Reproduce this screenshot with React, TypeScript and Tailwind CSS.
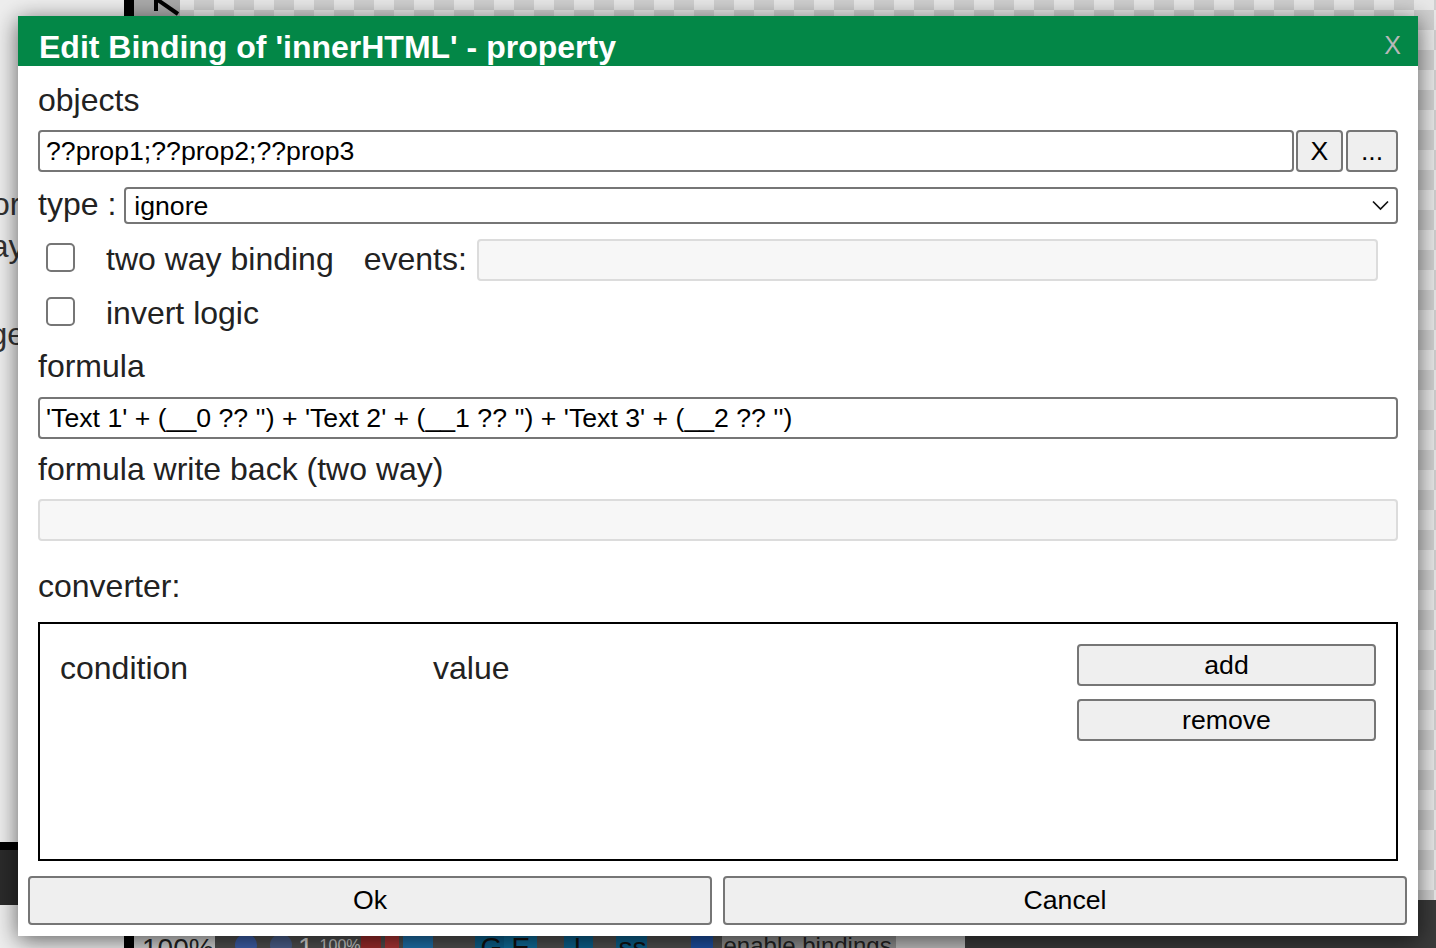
import React from "react";

const label = "text-[32px] leading-[36px] text-[#222]";
const btn =
  "bg-[#efefef] border-2 border-[#767676] rounded-[4px] text-[26.67px] leading-none text-black flex items-center justify-center";
const box = "w-[29px] h-[29px] border-2 border-[#767676] rounded-[5px] bg-white shrink-0";

function Backdrop() {
  return (
    <div className="flex h-full w-full">
      {/* sidebar of the app under the dialog */}
      <div className="flex w-[124px] flex-col overflow-hidden bg-[#eeeeee] text-[32px] leading-[36px] text-[#333]">
        <div className="h-[186px] shrink-0" />
        <div className="ml-[-49px] whitespace-nowrap">color</div>
        <div className="ml-[-75px] mt-[6px] whitespace-nowrap">display</div>
        <div className="ml-[-62px] mt-[52px] whitespace-nowrap">image</div>
        <div className="mt-[490px] h-[8px] shrink-0 bg-black" />
        <div className="h-[55px] shrink-0 bg-[#2b2b2b]" />
        <div className="flex-1" />
      </div>
      <div className="w-[10px] bg-black" />
      {/* canvas + bottom toolbar */}
      <div className="flex flex-1 flex-col">
        <div className="flex-1 bg-[image:conic-gradient(#d0d0d0_25%,#e8e8e8_0_50%,#d0d0d0_0_75%,#e8e8e8_0)] bg-[length:40px_40px] bg-[position:0_-10px]">
          <div className="h-[40px] w-[46px] bg-[#ababab]">
            <svg width="46" height="16" viewBox="0 0 46 16">
              <path d="M22 -10 L22 11" stroke="#000" strokeWidth="4" fill="none" />
              <path d="M21 -2 L44 14" stroke="#000" strokeWidth="4" fill="none" />
            </svg>
          </div>
        </div>
        <div className="flex h-[48px] bg-[#3a3a3a] text-[28px] leading-none">
          <div className="h-full w-[81px] bg-[#d2d2d2] pl-[8px] pt-[35px] text-[#222]">100%</div>
          <div className="flex h-full w-[750px] items-start bg-[#4e4e4e] pt-[34px]">
            <div className="ml-[20px] h-[22px] w-[22px] rounded-full bg-[#3d5fa8]" />
            <div className="ml-[13px] h-[22px] w-[22px] rounded-full bg-[#4a5f8a]" />
            <span className="ml-[6px] text-[#ddd]">1</span>
            <span className="ml-[6px] mt-[4px] text-[16px] text-[#ccc]">100%</span>
            <div className="h-[14px] w-[20px] bg-[#9a2a2a]" />
            <div className="ml-[4px] h-[14px] w-[14px] bg-[#a33]" />
            <div className="ml-[4px] h-[14px] w-[30px] bg-[#1e6fa8]" />
            <div className="ml-[42px] h-[14px] w-[29px] bg-[#0b5f8a] pl-[6px] text-[#111]">G</div>
            <div className="h-[14px] w-[33px] bg-[#0e6a96] pl-[8px] text-[#111]">E</div>
            <div className="ml-[27px] h-[14px] w-[29px] bg-[#0b5f8a] pl-[10px] text-[#111]">I</div>
            <div className="ml-[23px] h-[14px] w-[31px] bg-[#0b5f8a] pl-[3px] text-[#111]">ss</div>
            <div className="ml-[44px] h-[14px] w-[22px] bg-[#1d4fa0]" />
            <div className="ml-[9px] h-[14px] whitespace-nowrap bg-[#8e8e8e] pl-[2px] pr-[4px] text-[24px] text-[#222]">
              enable bindings
            </div>
            <div className="h-[14px] flex-1 bg-[#bdbdbd]" />
          </div>
          <div className="flex-1" />
        </div>
      </div>
    </div>
  );
}

function Dialog() {
  return (
    <div className="absolute left-[18px] top-[16px] flex w-[1400px] flex-col bg-white shadow-[0_4px_22px_rgba(0,0,0,0.6)]">
      <div className="flex h-[50px] items-start justify-between bg-[#038747] pl-[21px] pr-[17px] pt-[13px]">
        <span className="text-[32px] font-bold leading-[36px] text-white">
          Edit Binding of 'innerHTML' - property
        </span>
        <span className="mt-[4px] text-[25px] leading-none text-[#b8b8b8]">X</span>
      </div>

      <div className="flex flex-col px-[20px]">
        <div className={`${label} mt-[16px]`}>objects</div>
        <div className="mt-[12px] flex h-[42px]">
          <input
            readOnly
            value="??prop1;??prop2;??prop3"
            className="h-full flex-1 rounded-[4px] border-2 border-[#767676] bg-white pl-[6px] text-[26.67px] text-black outline-none"
          />
          <button className={`${btn} ml-[2px] h-full w-[47px]`}>X</button>
          <button className={`${btn} ml-[3px] h-full w-[52px]`}>...</button>
        </div>

        <div className="mt-[15px] flex h-[37px] items-center">
          <span className={`${label} mt-[-4px]`}>type :</span>
          <div className="ml-[8px] flex h-[37px] flex-1 items-center justify-between rounded-[4px] border-2 border-[#767676] bg-white pl-[8px] pr-[7px]">
            <span className="text-[26.67px] text-black">ignore</span>
            <svg width="17" height="11" viewBox="0 0 17 11">
              <path d="M1 1.5 L8.5 9 L16 1.5" stroke="#111" strokeWidth="1.7" fill="none" />
            </svg>
          </div>
        </div>

        <div className="mt-[15px] flex h-[42px] items-start">
          <div className={`${box} ml-[8px] mt-[4px]`} />
          <span className={`${label} ml-[31px] mt-[2px] whitespace-nowrap`}>two way binding</span>
          <span className={`${label} ml-[30px] mt-[2px] whitespace-nowrap`}>events:</span>
          <div className="ml-[10px] mr-[20px] h-[42px] flex-1 rounded-[4px] border-2 border-[#dcdcdc] bg-[#f7f7f7]" />
        </div>

        <div className="mt-[12px] flex items-start">
          <div className={`${box} ml-[8px] mt-[4px]`} />
          <span className={`${label} ml-[31px] mt-[2px]`}>invert logic</span>
        </div>

        <div className={`${label} mt-[17px]`}>formula</div>
        <input
          readOnly
          value="'Text 1' + (__0 ?? '') + 'Text 2' + (__1 ?? '') + 'Text 3' + (__2 ?? '')"
          className="mt-[13px] h-[42px] rounded-[4px] border-2 border-[#767676] bg-white pl-[6px] text-[26.67px] text-black outline-none"
        />

        <div className={`${label} mt-[12px]`}>formula write back (two way)</div>
        <div className="mt-[12px] h-[42px] rounded-[4px] border-2 border-[#dcdcdc] bg-[#f7f7f7]" />

        <div className={`${label} mt-[27px]`}>converter:</div>
        <div className="mt-[18px] flex h-[239px] items-start border-2 border-black px-[20px] pt-[20px]">
          <span className={`${label} mt-[6px] w-[373px]`}>condition</span>
          <span className={`${label} mt-[6px]`}>value</span>
          <div className="flex-1" />
          <div className="flex w-[299px] flex-col gap-[13px]">
            <button className={`${btn} h-[42px]`}>add</button>
            <button className={`${btn} h-[42px]`}>remove</button>
          </div>
        </div>
      </div>

      <div className="mt-[15px] flex gap-[11px] pb-[11px] pl-[10px] pr-[11px]">
        <button className={`${btn} h-[49px] flex-1`}>Ok</button>
        <button className={`${btn} h-[49px] flex-1`}>Cancel</button>
      </div>
    </div>
  );
}

export default function App() {
  return (
    <div className="relative h-[948px] w-[1436px] overflow-hidden font-['Liberation_Sans',Arial,sans-serif]">
      <Backdrop />
      <Dialog />
    </div>
  );
}
